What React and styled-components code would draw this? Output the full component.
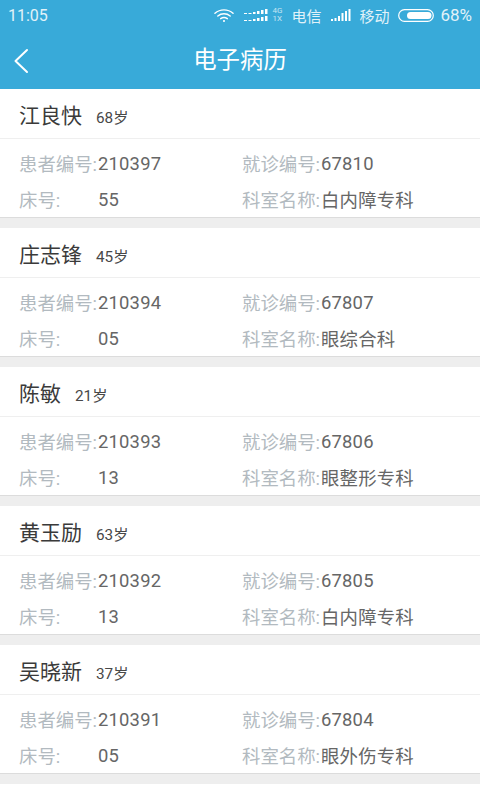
import React from 'react';
import styled, {createGlobalStyle} from 'styled-components';

const FONT = `Roboto, "Noto Sans CJK SC", sans-serif`;

const patients = [
    {name: '江良快', age: 68, no: '210397', visit: '67810', bed: '55', dept: '白内障专科'},
    {name: '庄志锋', age: 45, no: '210394', visit: '67807', bed: '05', dept: '眼综合科'},
    {name: '陈敏', age: 21, no: '210393', visit: '67806', bed: '13', dept: '眼整形专科'},
    {name: '黄玉励', age: 63, no: '210392', visit: '67805', bed: '13', dept: '白内障专科'},
    {name: '吴晓新', age: 37, no: '210391', visit: '67804', bed: '05', dept: '眼外伤专科'},
];

function App() {
    return (
        <Page>
            <GlobalStyle/>
            <StatusBar>
                <Time>11:05</Time>
                <StatusRight>
                    <svg width="20" height="15" viewBox="0 0 21 15" fill="none" stroke="#fff" strokeWidth="1.500" strokeLinecap="round">
                        <path d="M1 5.200C6.500 0.400 14.500 0.400 20 5.200"/>
                        <path d="M4 8C7.800 4.900 13.200 4.900 17 8"/>
                        <path d="M7 10.800C9 9.400 12 9.400 14 10.800"/>
                        <circle cx="10.500" cy="13.300" r="1.100" fill="#fff" stroke="none"/>
                    </svg>
                    <SimBars width="25" height="13" viewBox="0 0 25 13" fill="#fff">
                        <path d="M0 4h3v1H0zM4.500 4h3v1h-3zM9 3h2.500v2H9zM13 2h2.500v3H13zM17 1h2.500v4H17zM21 0h2.500v5H21z"/>
                        <path d="M0 11h3v1H0zM4.500 11h3v1h-3zM9 10h2.500v2H9zM13 9h2.500v3H13zM17 8h2.500v4H17zM21 7h2.500v5H21z"/>
                    </SimBars>
                    <NetLabel><span>4G</span><span>1X</span></NetLabel>
                    <Carrier $first>电信</Carrier>
                    <SimBars width="20" height="12" viewBox="0 0 20 12" fill="#fff">
                        <path d="M0 10h2v2H0zM3.500 9h2v3h-2zM7 7h2v5H7zM10.500 4h2v8h-2zM14 2h2v10h-2zM17.500 0h2v12h-2z"/>
                    </SimBars>
                    <Carrier>移动</Carrier>
                    <Battery width="37" height="13" viewBox="0 0 37 13">
                        <rect x="0.700" y="0.700" width="34.600" height="11.600" rx="5.800" fill="none" stroke="#fff" strokeWidth="1.200"/>
                        <rect x="9" y="3" width="24.500" height="7" rx="3.500" fill="#fff"/>
                    </Battery>
                    <Percent>68%</Percent>
                </StatusRight>
            </StatusBar>
            <TitleBar>
                <BackIcon width="16" height="26" viewBox="0 0 16 26" fill="none" stroke="#fff" strokeWidth="2" strokeLinecap="round" strokeLinejoin="round">
                    <path d="M14 2L2.500 13L14 24"/>
                </BackIcon>
                <Title>电子病历</Title>
            </TitleBar>
            {patients.map(p => (
                <Card key={p.no}>
                    <NameRow>
                        <Name>{p.name}</Name>
                        <Age>{p.age}岁</Age>
                    </NameRow>
                    <Info>
                        <Field><Label>患者编号:</Label><Value>{p.no}</Value></Field>
                        <Field><Label>就诊编号:</Label><Value>{p.visit}</Value></Field>
                        <Field><Label>床号:</Label><Value>{p.bed}</Value></Field>
                        <Field><Label>科室名称:</Label><Value>{p.dept}</Value></Field>
                    </Info>
                </Card>
            ))}
        </Page>
    );
}

export default App;

const GlobalStyle = createGlobalStyle`
  html, body {
    margin: 0;
    padding: 0;
    background: #fff;
  }
  body {
    font-family: ${FONT};
  }
`

const Page = styled.div`
  width: 480px;
  height: 800px;
  overflow: hidden;
  background: #fff;
`

const StatusBar = styled.div`
  height: 30px;
  background: #38aad9;
  color: #fff;
  display: flex;
  align-items: center;
  justify-content: space-between;
  padding: 0 8px;
  box-sizing: border-box;
`

const Time = styled.span`
  font-size: 16px;
  opacity: .85;
`

const StatusRight = styled.div`
  display: flex;
  align-items: center;
`

const SimBars = styled.svg`
  margin-left: 10px;
`

const Battery = styled.svg`
  margin-left: 9px;
`

const NetLabel = styled.div`
  display: flex;
  flex-direction: column;
  font-size: 8px;
  line-height: 8px;
  margin-left: 3px;
  opacity: .7;
`

const Carrier = styled.span`
  font-size: 15px;
  margin-left: ${props => props.$first ? '9px' : '8px'};
  opacity: .85;
`

const Percent = styled.span`
  font-size: 17px;
  margin-left: 5px;
  opacity: .85;
`

const TitleBar = styled.div`
  height: 59px;
  background: #38aad9;
  position: relative;
  display: flex;
  align-items: center;
  justify-content: center;
`

const BackIcon = styled.svg`
  position: absolute;
  left: 13px;
  top: 18px;
`

const Title = styled.h1`
  margin: 0;
  font-size: 23.400px;
  line-height: 30px;
  font-weight: 400;
  color: #fff;
`

const Card = styled.div`
  height: 139px;
  box-sizing: border-box;
  background: #fff;
  border-bottom: 10px solid #eeeeee;
`

const NameRow = styled.div`
  height: 50px;
  box-sizing: border-box;
  display: flex;
  align-items: baseline;
  padding: 12px 19px 0;
  border-bottom: 1.500px solid #efefef;
`

const Name = styled.span`
  font-size: 21px;
  line-height: 30px;
  color: #3a3a3a;
`

const Age = styled.span`
  font-size: 15.300px;
  color: #484848;
  margin-left: 14px;
`

const Info = styled.div`
  height: 79px;
  box-sizing: border-box;
  display: grid;
  grid-template-columns: 223px 1fr;
  grid-auto-rows: 36px;
  padding: 6px 0 0 19px;
  border-bottom: 1px solid #dcdcdc;
`

const Field = styled.div`
  display: flex;
  align-items: center;
  font-size: 18.400px;
  white-space: nowrap;
`

const Label = styled.span`
  color: #b2bac0;
  min-width: 79px;
`

const Value = styled.span`
  color: #666;
  letter-spacing: .2px;
`
